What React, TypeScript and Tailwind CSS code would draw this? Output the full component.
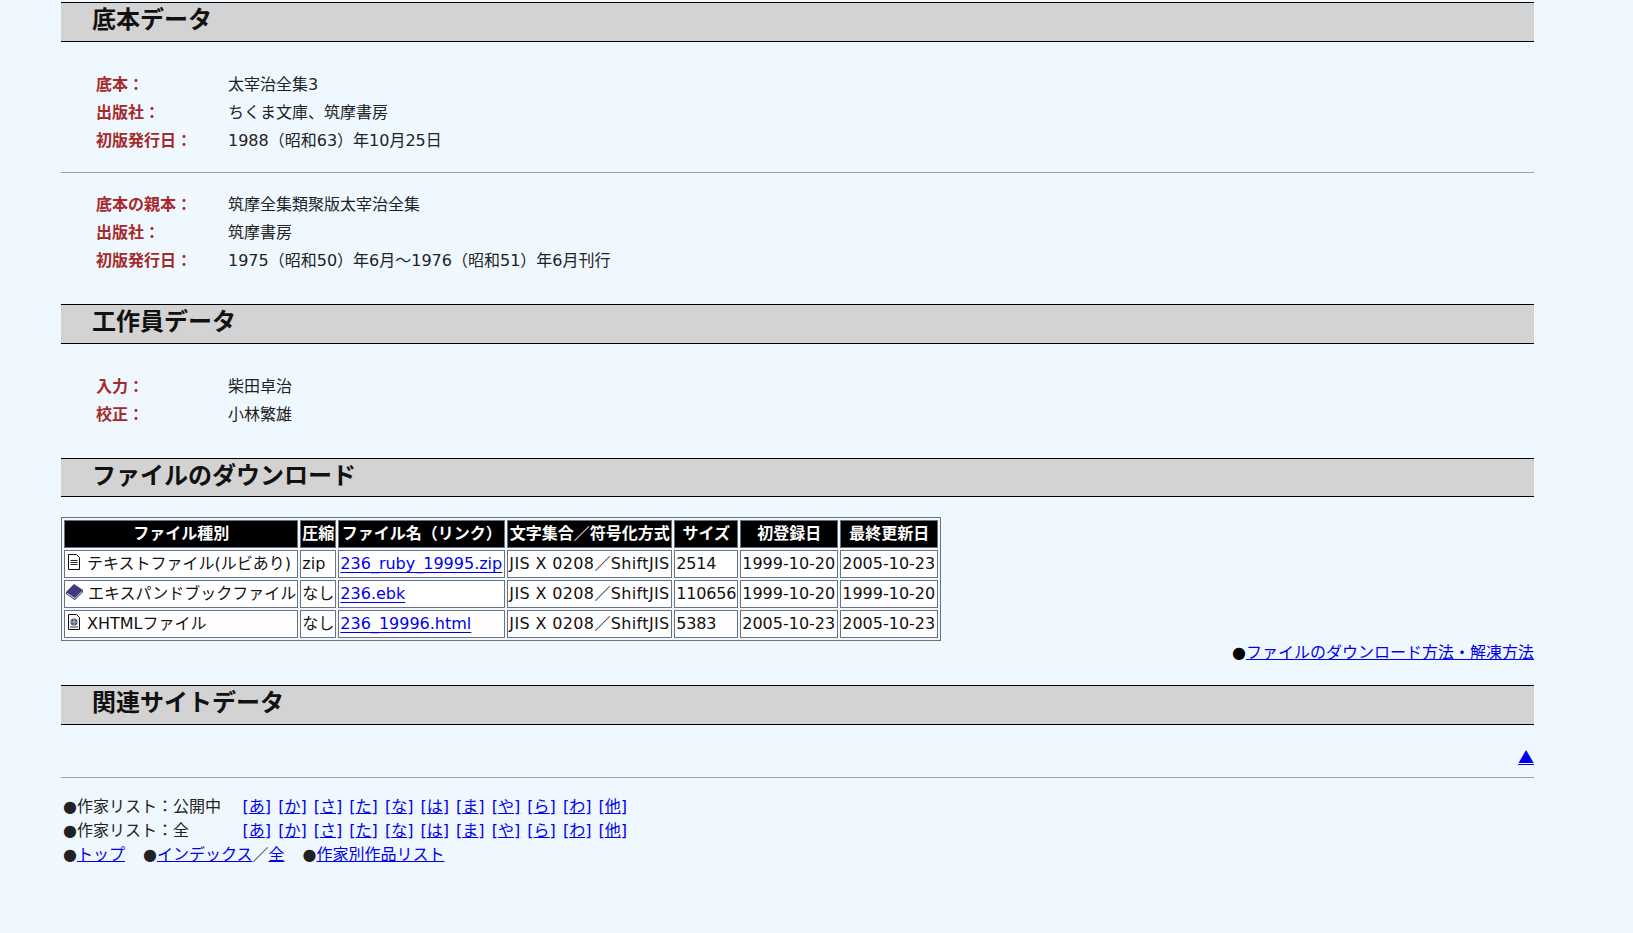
import type { ReactNode } from 'react';

const FONT = "font-['DejaVu_Sans','Noto_Sans_CJK_JP',sans-serif]";

function SectionTitle({ children, className }: { children: ReactNode; className: string }) {
  return (
    <h2 className={`border-y border-black bg-[#d3d3d3] pl-[31px] text-[24px] leading-[34px] font-bold text-[#111] ${className}`}>
      {children}
    </h2>
  );
}

function InfoRow({ label, value }: { label: string; value: string }) {
  return (
    <div className="flex h-7 items-center pl-[35px] text-[16px] text-[#222]">
      <span className="w-[132px] shrink-0 font-bold text-[#a52a2a]">{label}</span>
      <span>{value}</span>
    </div>
  );
}

function TextIcon() {
  return (
    <svg viewBox="0 0 16 16" className="h-4 w-4">
      <path d="M2.500.5h8l3 3v12h-11z" fill="#fff" stroke="#111" />
      <path d="M4.500 6.500h7M4.500 8.500h7M4.500 10.500h7" stroke="#222" />
    </svg>
  );
}

function BookIcon() {
  return (
    <svg viewBox="0 0 18 18" className="-ml-px h-[18px] w-[18px]">
      <path d="M9 1l9 6-8 8-9-6z" fill="#3f3a7c" />
      <path d="M1 9l9 6 8-8v2l-8 8-9-6z" fill="#25224f" />
      <path d="M2 10.500l8 5 7-7" stroke="#ddd" fill="none" />
    </svg>
  );
}

function HtmlIcon() {
  return (
    <svg viewBox="0 0 16 16" className="h-4 w-4">
      <path d="M2.500.5h8l3 3v12h-11z" fill="#f4f4f4" stroke="#111" />
      <circle cx="8" cy="8" r="3.500" fill="#3f5c72" />
      <path d="M5 8h6M8 5v6" stroke="#a9bccb" />
      <path d="M4 13h8" stroke="#444" />
    </svg>
  );
}

const HEADERS = [
  { label: 'ファイル種別', w: 'w-[234px]' },
  { label: '圧縮', w: 'w-[36px]' },
  { label: 'ファイル名（リンク）', w: 'w-[167px]' },
  { label: '文字集合／符号化方式', w: 'w-[165px]' },
  { label: 'サイズ', w: 'w-[63px]' },
  { label: '初登録日', w: 'w-[98px]' },
  { label: '最終更新日', w: 'w-[98px]' },
];

const FILES = [
  { icon: <TextIcon />, type: 'テキストファイル(ルビあり)', comp: 'zip', name: '236_ruby_19995.zip', size: '2514', first: '1999-10-20', last: '2005-10-23' },
  { icon: <BookIcon />, type: 'エキスパンドブックファイル', comp: 'なし', name: '236.ebk', size: '110656', first: '1999-10-20', last: '1999-10-20' },
  { icon: <HtmlIcon />, type: 'XHTMLファイル', comp: 'なし', name: '236_19996.html', size: '5383', first: '2005-10-23', last: '2005-10-23' },
];

const KANA = ['あ', 'か', 'さ', 'た', 'な', 'は', 'ま', 'や', 'ら', 'わ', '他'];

const cell = 'h-7 border border-[#6b7280] bg-white px-px text-[16px] leading-[24px] whitespace-nowrap';
const link = 'text-[#0000ee] underline';

function KanaList({ title }: { title: string }) {
  return (
    <div className="flex h-6 items-center pl-[2px] text-[16px] text-[#222]">
      <span className="w-[179px] shrink-0">●作家リスト：{title}</span>
      <span className="flex gap-[6px]">
        {KANA.map((k) => (
          <a key={k} href="#" className={`${link} w-[29.600px] text-center`}>[{k}]</a>
        ))}
      </span>
    </div>
  );
}

export default function App() {
  return (
    <div className={`h-[933px] overflow-hidden bg-[#f0f8ff] pt-[2px] ${FONT}`}>
      <div className="ml-[61px] w-[1473px]">
        <SectionTitle className="mb-[29px] h-10">底本データ</SectionTitle>
        <InfoRow label="底本：" value="太宰治全集3" />
        <InfoRow label="出版社：" value="ちくま文庫、筑摩書房" />
        <InfoRow label="初版発行日：" value="1988（昭和63）年10月25日" />
        <hr className="mt-[17px] mb-[18px] border-t border-[#a3a3a3]" />
        <InfoRow label="底本の親本：" value="筑摩全集類聚版太宰治全集" />
        <InfoRow label="出版社：" value="筑摩書房" />
        <InfoRow label="初版発行日：" value="1975（昭和50）年6月～1976（昭和51）年6月刊行" />

        <SectionTitle className="mt-[29px] mb-[29px] h-10">工作員データ</SectionTitle>
        <InfoRow label="入力：" value="柴田卓治" />
        <InfoRow label="校正：" value="小林繁雄" />

        <SectionTitle className="mt-[29px] mb-[20px] h-[39px]">ファイルのダウンロード</SectionTitle>
        <table className="border-separate border-spacing-[2px] border border-[#6b7280] text-[#111]">
          <thead>
            <tr>
              {HEADERS.map((h) => (
                <th key={h.label} className={`${h.w} h-7 border border-[#6b7280] bg-black px-px text-center text-[16px] leading-[24px] font-bold whitespace-nowrap text-white`}>
                  {h.label}
                </th>
              ))}
            </tr>
          </thead>
          <tbody>
            {FILES.map((f) => (
              <tr key={f.name}>
                <td className={cell}>
                  <span className="flex items-center gap-[5px]">
                    <span className="-mt-1 shrink-0">{f.icon}</span>
                    {f.type}
                  </span>
                </td>
                <td className={cell}>{f.comp}</td>
                <td className={cell}><a href="#" className={`${link} underline-offset-[3px]`}>{f.name}</a></td>
                <td className={`${cell} tracking-[0.36px]`}>JIS X 0208／ShiftJIS</td>
                <td className={`${cell} tracking-[-0.2px]`}>{f.size}</td>
                <td className={cell}>{f.first}</td>
                <td className={cell}>{f.last}</td>
              </tr>
            ))}
          </tbody>
        </table>
        <div className="mt-[-2px] h-[28px] text-right text-[16px] leading-[28px] text-black">
          ●<a href="#" className={link}>ファイルのダウンロード方法・解凍方法</a>
        </div>

        <SectionTitle className="mt-[18px] mb-[19px] h-10">関連サイトデータ</SectionTitle>
        <div className="h-6 text-right text-[16px] leading-[24px]">
          <a href="#" className={`${link} font-['Noto_Sans_CJK_JP',sans-serif]`}>▲</a>
        </div>
        <hr className="mt-[9px] mb-[17px] border-t border-[#a3a3a3]" />
        <KanaList title="公開中" />
        <KanaList title="全" />
        <div className="flex h-6 items-center pl-[2px] text-[16px] text-[#222]">
          <span>●<a href="#" className={link}>トップ</a></span>
          <span className="ml-[18px]">●<a href="#" className={link}>インデックス</a>／<a href="#" className={link}>全</a></span>
          <span className="ml-[18px]">●<a href="#" className={link}>作家別作品リスト</a></span>
        </div>
      </div>
    </div>
  );
}
